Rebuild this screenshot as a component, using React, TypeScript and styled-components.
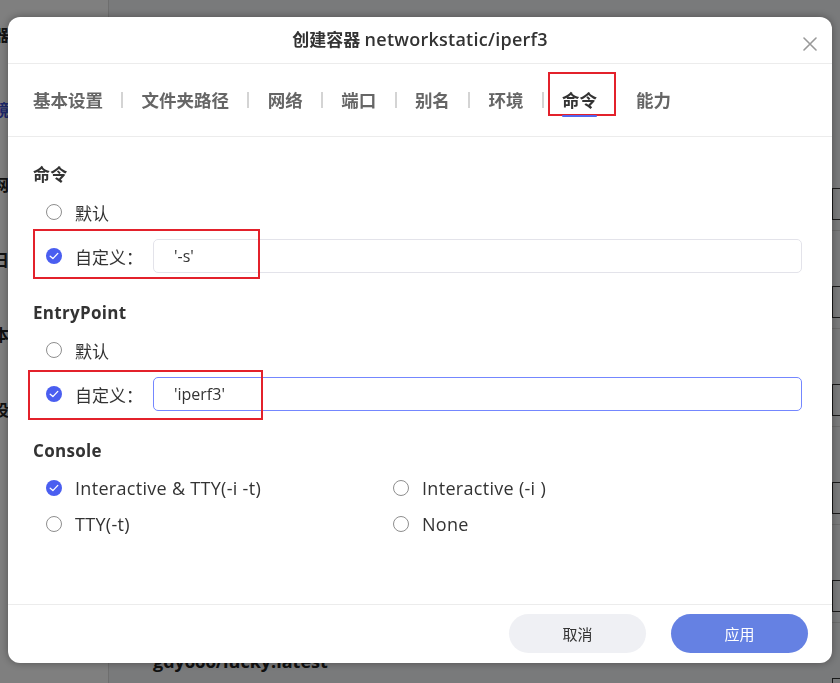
import React, { useState } from "react";
import styled, { createGlobalStyle } from "styled-components";

const FONT = `"Open Sans", "Noto Sans CJK SC", sans-serif`;

const GlobalStyle = createGlobalStyle`
  html, body {
    margin: 0;
    padding: 0;
    overflow: hidden;
    font-family: ${FONT};
  }
  * {
    box-sizing: border-box;
  }
`;

/* ---------- page behind the dialog ---------- */

const Page = styled.div`
  display: flex;
  width: 840px;
  height: 683px;
  overflow: hidden;
  background: #f3f4f6;
`;

const Sidebar = styled.div`
  width: 109px;
  flex-shrink: 0;
  background: #ffffff;
  border-right: 1px solid #dcdcdc;
  overflow: hidden;
`;

const SideItem = styled.div<{ $active?: boolean }>`
  height: 75px;
  line-height: 70px;
  margin-left: -7px;
  font-size: 16px;
  font-weight: 600;
  color: ${(p) => (p.$active ? "#3a4fd6" : "#222")};
`;

const Main = styled.div`
  flex: 1;
  padding-top: 141px;
  overflow: hidden;
`;

const Row = styled.div`
  width: 800px;
  height: 90px;
  margin-bottom: 8px;
  padding: 18px 0 0 44px;
  border-bottom: 1px solid #d8d8d8;
`;

const RowName = styled.div`
  font-size: 18px;
  font-weight: 700;
  line-height: 24px;
  color: #222;
`;

const RowActions = styled.div`
  display: flex;
  margin-top: 5px;
  padding-left: 679px;
`;

const GhostButton = styled.div`
  height: 32px;
  padding: 0 14px;
  border: 1px solid #333;
  line-height: 30px;
  font-size: 14px;
  color: #222;
  white-space: nowrap;
`;

/* ---------- dialog ---------- */

const Overlay = styled.div`
  position: fixed;
  inset: 0;
  background: rgba(0, 0, 0, 0.5);
  display: flex;
  justify-content: center;
  align-items: flex-start;
  padding-top: 17px;
`;

const Dialog = styled.div`
  width: 824px;
  height: 646px;
  background: #fff;
  border-radius: 12px;
  box-shadow: 0 0 8px rgba(0, 0, 0, 0.35);
  display: flex;
  flex-direction: column;
  overflow: hidden;
`;

const Header = styled.div`
  position: relative;
  height: 47px;
  flex-shrink: 0;
  display: flex;
  align-items: center;
  justify-content: center;
  border-bottom: 1px solid #ececec;
`;

const Title = styled.div`
  font-size: 17px;
  font-weight: 600;
  color: #333;
  padding-bottom: 3px;
`;

/* latin runs look a touch larger than the CJK glyphs in the original */
const Latin = styled.span<{ $size: number }>`
  font-size: ${(p) => p.$size}px;
  letter-spacing: 0.25px;
`;

const CloseButton = styled.button`
  position: absolute;
  right: 15px;
  top: 20px;
  width: 14px;
  height: 14px;
  padding: 0;
  border: none;
  background: none;
  cursor: pointer;
  display: flex;
`;

const Tabs = styled.div`
  height: 73px;
  flex-shrink: 0;
  display: flex;
  align-items: center;
  padding-left: 25px;
  padding-bottom: 1px;
  border-bottom: 1px solid #ececec;
`;

const Tab = styled.div<{ $active?: boolean }>`
  position: relative;
  font-size: 17.5px;
  font-weight: 700;
  line-height: 26px;
  color: ${(p) => (p.$active ? "#333" : "#666")};
  cursor: pointer;
  &::after {
    content: "";
    display: ${(p) => (p.$active ? "block" : "none")};
    position: absolute;
    left: 0;
    right: 0;
    bottom: -4px;
    height: 2px;
    border-radius: 1px;
    background: #5266ee;
  }
`;

const TabDivider = styled.span`
  width: 2px;
  height: 16px;
  margin: 0 18.3px;
  background: #d4d4d4;
`;

const TabSpacer = styled.span`
  width: 39px;
`;

const Mark = styled.div<{ $l: number; $t: number; $w: number; $h: number }>`
  position: absolute;
  left: ${(p) => p.$l}px;
  top: ${(p) => p.$t}px;
  width: ${(p) => p.$w}px;
  height: ${(p) => p.$h}px;
  border: 2px solid #e3212b;
  pointer-events: none;
`;

const Body = styled.div`
  flex: 1;
  padding: 26px 30px 0 25px;
`;

const Section = styled.div`
  margin-bottom: 28px;
`;

const SectionTitle = styled.div`
  font-size: 17px;
  font-weight: 700;
  line-height: 24px;
  letter-spacing: 0.3px;
  color: #333;
  margin-bottom: 9px;
`;

const Options = styled.div`
  display: flex;
  flex-direction: column;
  gap: 11px;
  padding-left: 13px;
`;

const OptionRow = styled.label`
  position: relative;
  display: flex;
  align-items: center;
  height: 32px;
  gap: 13px;
  font-size: 17px;
  color: #333;
  cursor: pointer;
`;

const CustomRow = styled(OptionRow)`
  height: 34px;
`;

const CustomLabel = styled.span`
  width: 65px;
  white-space: nowrap;
`;

const Input = styled.input<{ $focus?: boolean }>`
  flex: 1;
  height: 34px;
  padding: 0 20px;
  border: 1px solid ${(p) => (p.$focus ? "#7487ff" : "#e3e3ea")};
  border-radius: 5px;
  font-family: ${FONT};
  font-size: 16px;
  color: #333;
  outline: none;
  background: #fff;
`;

const ConsoleGrid = styled.div`
  display: grid;
  grid-template-columns: 347px 1fr;
  grid-auto-rows: 32px;
  row-gap: 4px;
  padding-left: 13px;
`;

const ConsoleOption = styled(OptionRow)`
  font-size: 18px;
  letter-spacing: 0.3px;
  gap: 13px;
`;

const Circle = styled.span<{ $on?: boolean }>`
  width: 16px;
  height: 16px;
  flex-shrink: 0;
  border-radius: 50%;
  border: ${(p) => (p.$on ? "none" : "1px solid #8e8e8e")};
  background: ${(p) => (p.$on ? "#4a5ef0" : "#fff")};
  display: flex;
  align-items: center;
  justify-content: center;
`;

const Footer = styled.div`
  height: 59px;
  flex-shrink: 0;
  border-top: 1px solid #ececec;
  display: flex;
  align-items: center;
  justify-content: flex-end;
  gap: 25px;
  padding: 0 24px 1px 0;
`;

const FooterButton = styled.button<{ $primary?: boolean }>`
  width: 137px;
  height: 39px;
  border: none;
  border-radius: 20px;
  font-family: ${FONT};
  font-size: 15px;
  color: ${(p) => (p.$primary ? "#fff" : "#333")};
  background: ${(p) => (p.$primary ? "#6581e3" : "#eff0f4")};
  cursor: pointer;
`;

const Radio = ({ on }: { on?: boolean }) => (
  <Circle $on={on}>
    {on && (
      <svg width="10" height="8" viewBox="0 0 10 8">
        <path
          d="M1.2 4.2 L3.9 6.6 L8.8 1.4"
          fill="none"
          stroke="#fff"
          strokeWidth="1.3"
          strokeLinecap="round"
          strokeLinejoin="round"
        />
      </svg>
    )}
  </Circle>
);

const tabs = ["基本设置", "文件夹路径", "网络", "端口", "别名", "环境", "命令", "能力"];

const rows = [
  "mysql:latest",
  "nginx:latest",
  "redis:alpine",
  "portainer/portainer-ce",
  "networkstatic/iperf3",
  "gdy666/lucky:latest",
];

const consoleOptions = [
  "Interactive & TTY(-i -t)",
  "Interactive (-i )",
  "TTY(-t)",
  "None",
];

export default function App() {
  const [cmdMode, setCmdMode] = useState("custom");
  const [entryMode, setEntryMode] = useState("custom");
  const [consoleMode, setConsoleMode] = useState(consoleOptions[0]);
  const [cmd, setCmd] = useState("'-s'");
  const [entry, setEntry] = useState("'iperf3'");

  return (
    <>
      <GlobalStyle />
      <Page>
        <Sidebar>
          {["器", "镜", "网", "日", "本", "设"].map((c, i) => (
            <SideItem key={c} $active={i === 1}>
              {c}
            </SideItem>
          ))}
        </Sidebar>
        <Main>
          {rows.map((r) => (
            <Row key={r}>
              <RowName>{r}</RowName>
              <RowActions>
                <GhostButton>终端</GhostButton>
              </RowActions>
            </Row>
          ))}
        </Main>
      </Page>

      <Overlay>
        <Dialog>
          <Header>
            <Title>
              创建容器 <Latin $size={18}>networkstatic/iperf3</Latin>
            </Title>
            <CloseButton aria-label="close">
              <svg width="14" height="14" viewBox="0 0 14 14">
                <path
                  d="M1 1 L13 13 M13 1 L1 13"
                  stroke="#999"
                  strokeWidth="1.6"
                  strokeLinecap="round"
                />
              </svg>
            </CloseButton>
          </Header>

          <Tabs>
            {tabs.map((t, i) => (
              <React.Fragment key={t}>
                <Tab $active={t === "命令"}>
                  {t}
                  {t === "命令" && <Mark $l={-14} $t={-15} $w={68} $h={44} />}
                </Tab>
                {i < tabs.length - 1 &&
                  (t === "命令" ? <TabSpacer /> : <TabDivider />)}
              </React.Fragment>
            ))}
          </Tabs>

          <Body>
            <Section>
              <SectionTitle>命令</SectionTitle>
              <Options>
                <OptionRow onClick={() => setCmdMode("default")}>
                  <Radio on={cmdMode === "default"} />
                  默认
                </OptionRow>
                <CustomRow onClick={() => setCmdMode("custom")}>
                  <Radio on={cmdMode === "custom"} />
                  <CustomLabel>自定义：</CustomLabel>
                  <Input value={cmd} onChange={(e) => setCmd(e.target.value)} />
                  <Mark $l={-13} $t={-10} $w={227} $h={50} />
                </CustomRow>
              </Options>
            </Section>

            <Section>
              <SectionTitle>EntryPoint</SectionTitle>
              <Options>
                <OptionRow onClick={() => setEntryMode("default")}>
                  <Radio on={entryMode === "default"} />
                  默认
                </OptionRow>
                <CustomRow onClick={() => setEntryMode("custom")}>
                  <Radio on={entryMode === "custom"} />
                  <CustomLabel>自定义：</CustomLabel>
                  <Input
                    $focus
                    value={entry}
                    onChange={(e) => setEntry(e.target.value)}
                  />
                  <Mark $l={-18} $t={-7} $w={235} $h={50} />
                </CustomRow>
              </Options>
            </Section>

            <Section>
              <SectionTitle>Console</SectionTitle>
              <ConsoleGrid>
                {consoleOptions.map((o) => (
                  <ConsoleOption key={o} onClick={() => setConsoleMode(o)}>
                    <Radio on={consoleMode === o} />
                    {o}
                  </ConsoleOption>
                ))}
              </ConsoleGrid>
            </Section>
          </Body>

          <Footer>
            <FooterButton>取消</FooterButton>
            <FooterButton $primary>应用</FooterButton>
          </Footer>
        </Dialog>
      </Overlay>
    </>
  );
}
